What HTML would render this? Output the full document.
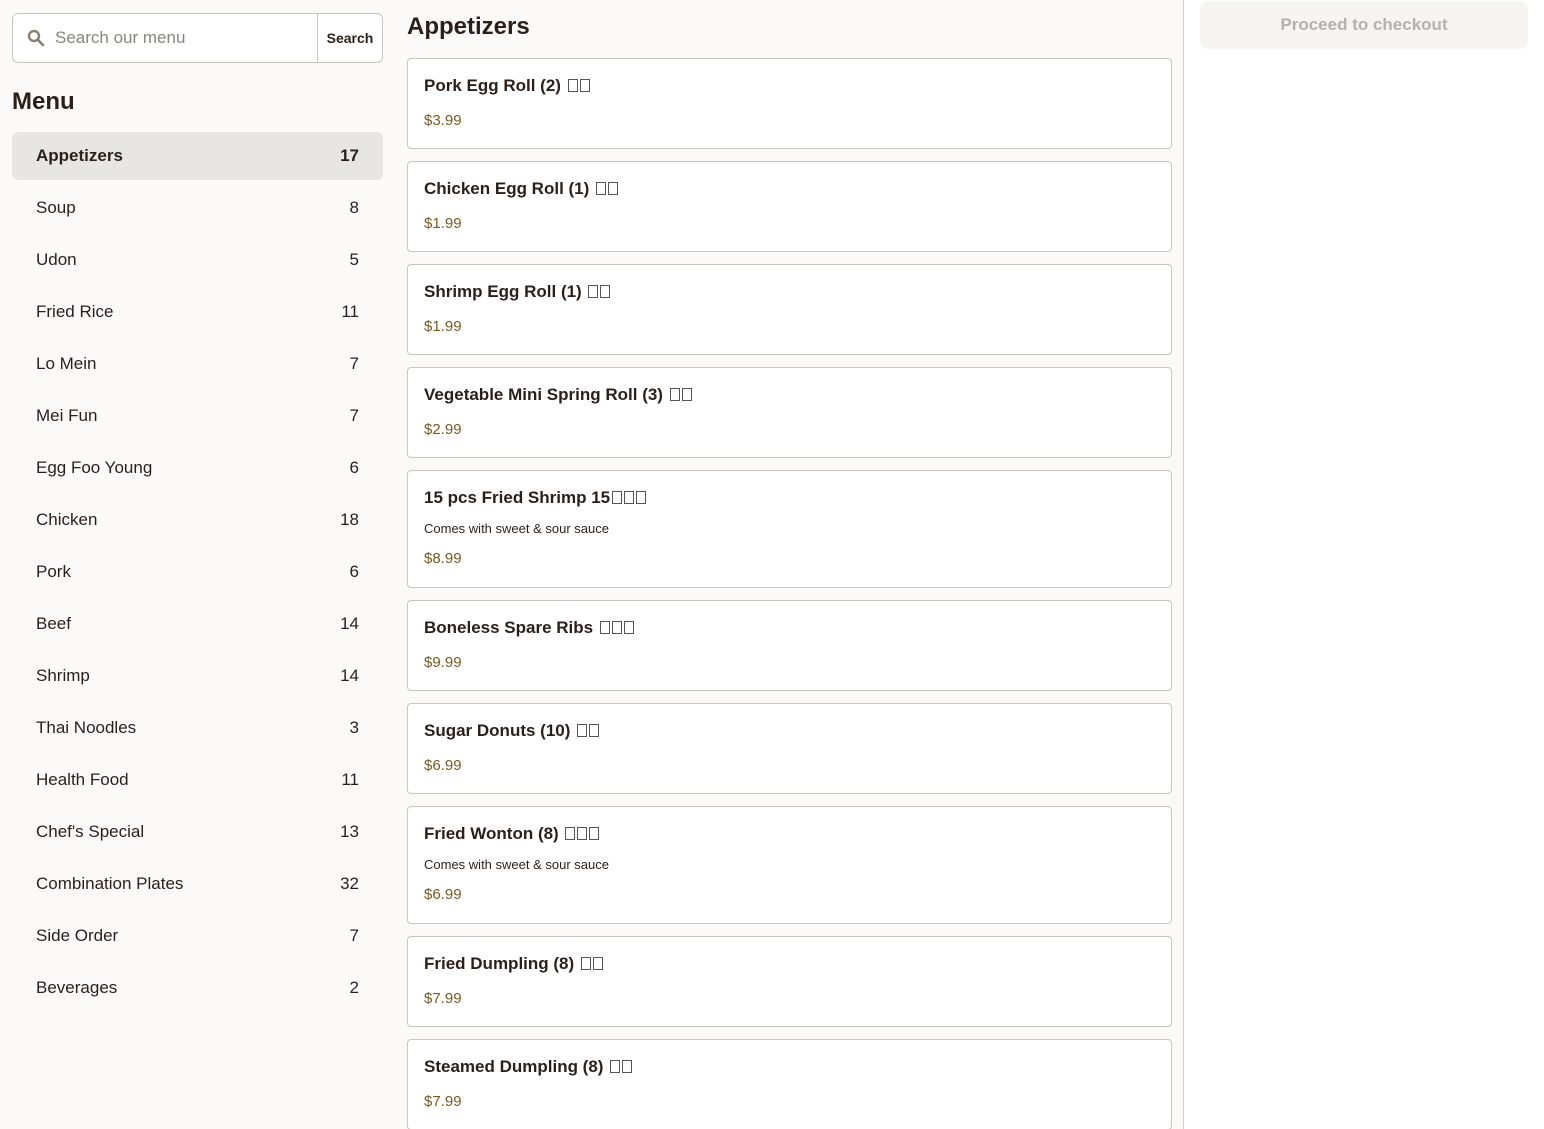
<!DOCTYPE html>
<html><head><meta charset="utf-8"><style>
*{box-sizing:border-box;margin:0;padding:0}
html,body{width:1544px;height:1129px;overflow:hidden}
body{background:#fbfaf8;font-family:"Liberation Sans",sans-serif;color:#2b1f1a;position:relative}
.search{position:absolute;left:12px;top:13px;width:371px;height:50px;border:1px solid #c9c6c2;border-radius:6px;background:#fff;display:flex}
.search .in{flex:1;display:flex;align-items:center;padding-left:14px;color:#8a8580;font-size:17px}
.search .btn{width:65px;border-left:1px solid #c9c6c2;display:flex;align-items:center;justify-content:center;font-size:14px;font-weight:bold;color:#2b1f1a}
h2.menu{position:absolute;left:12px;top:88px;font-size:24px;font-weight:bold}
.cats{position:absolute;left:12px;top:132px;width:371px}
.cat{height:48px;margin-bottom:4px;display:flex;justify-content:space-between;align-items:center;padding:0 24px;font-size:17px;border-radius:6px}
.cat.act{background:#e8e6e2;font-weight:bold}
h1{position:absolute;left:407px;top:13px;font-size:24px;font-weight:bold}
.list{position:absolute;left:407px;top:58px;width:765px}
.card{background:#fff;border:1px solid #c9c6c2;border-radius:4px;padding:17px 16px 0 16px;margin-bottom:12px;height:91px}
.card.d{height:118px}
.t{font-size:17px;font-weight:bold;line-height:20px}
.desc{font-size:13px;margin-top:13px;line-height:16px}
.p{color:#7a5a1e;font-size:15px;margin-top:16px}
.card.d .p{margin-top:13px}
.x{display:inline-block;width:10px;height:13px;border:1px solid #555;margin-left:2px;vertical-align:-1px}
.sep{position:absolute;left:1183px;top:0;width:1px;height:1129px;background:#d4d1cd}
.right{position:absolute;left:1184px;top:0;width:360px;height:1129px;background:#fff}
.co{position:absolute;left:1200px;top:1px;width:328px;height:48px;background:#f6f5f3;border-radius:8px;color:#b5b1ab;font-weight:bold;font-size:17px;display:flex;align-items:center;justify-content:center}
</style></head><body>
<div class="search"><div class="in"><svg width="18" height="18" viewBox="0 0 18 18" style="margin-right:10px"><circle cx="7" cy="7" r="5" fill="none" stroke="#8a7f70" stroke-width="2.4"/><path d="M11 11l5 5" stroke="#8a7f70" stroke-width="2.6" stroke-linecap="round"/></svg>Search our menu</div><div class="btn">Search</div></div>
<h2 class="menu">Menu</h2>
<div class="cats">
<div class="cat act"><span>Appetizers</span><span>17</span></div>
<div class="cat"><span>Soup</span><span>8</span></div>
<div class="cat"><span>Udon</span><span>5</span></div>
<div class="cat"><span>Fried Rice</span><span>11</span></div>
<div class="cat"><span>Lo Mein</span><span>7</span></div>
<div class="cat"><span>Mei Fun</span><span>7</span></div>
<div class="cat"><span>Egg Foo Young</span><span>6</span></div>
<div class="cat"><span>Chicken</span><span>18</span></div>
<div class="cat"><span>Pork</span><span>6</span></div>
<div class="cat"><span>Beef</span><span>14</span></div>
<div class="cat"><span>Shrimp</span><span>14</span></div>
<div class="cat"><span>Thai Noodles</span><span>3</span></div>
<div class="cat"><span>Health Food</span><span>11</span></div>
<div class="cat"><span>Chef's Special</span><span>13</span></div>
<div class="cat"><span>Combination Plates</span><span>32</span></div>
<div class="cat"><span>Side Order</span><span>7</span></div>
<div class="cat"><span>Beverages</span><span>2</span></div>
</div>
<h1>Appetizers</h1>
<div class="list">
<div class="card"><div class="t">Pork Egg Roll (2) <span class="x"></span><span class="x"></span></div><div class="p">$3.99</div></div>
<div class="card"><div class="t">Chicken Egg Roll (1) <span class="x"></span><span class="x"></span></div><div class="p">$1.99</div></div>
<div class="card"><div class="t">Shrimp Egg Roll (1) <span class="x"></span><span class="x"></span></div><div class="p">$1.99</div></div>
<div class="card"><div class="t">Vegetable Mini Spring Roll (3) <span class="x"></span><span class="x"></span></div><div class="p">$2.99</div></div>
<div class="card d"><div class="t">15 pcs Fried Shrimp 15<span class="x"></span><span class="x"></span><span class="x"></span></div><div class="desc">Comes with sweet &amp; sour sauce</div><div class="p">$8.99</div></div>
<div class="card"><div class="t">Boneless Spare Ribs <span class="x"></span><span class="x"></span><span class="x"></span></div><div class="p">$9.99</div></div>
<div class="card"><div class="t">Sugar Donuts (10) <span class="x"></span><span class="x"></span></div><div class="p">$6.99</div></div>
<div class="card d"><div class="t">Fried Wonton (8) <span class="x"></span><span class="x"></span><span class="x"></span></div><div class="desc">Comes with sweet &amp; sour sauce</div><div class="p">$6.99</div></div>
<div class="card"><div class="t">Fried Dumpling (8) <span class="x"></span><span class="x"></span></div><div class="p">$7.99</div></div>
<div class="card"><div class="t">Steamed Dumpling (8) <span class="x"></span><span class="x"></span></div><div class="p">$7.99</div></div>
</div>
<div class="right"></div>
<div class="sep"></div>
<div class="co">Proceed to checkout</div>
</body></html>
